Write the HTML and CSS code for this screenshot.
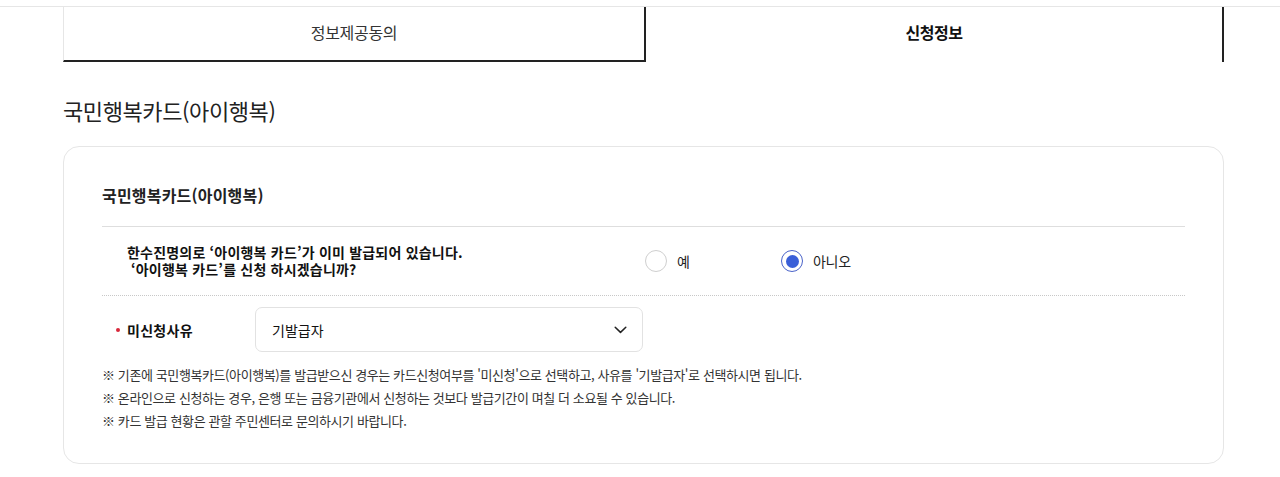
FILE: index.html
```html
<!DOCTYPE html>
<html lang="ko">
<head>
<meta charset="utf-8">
<title>신청정보</title>
<link rel="stylesheet" href="styles.css">
</head>
<body>
<div class="topbar"></div>
<div class="wrap">
  <div class="tabs">
    <div class="tab tab-off">정보제공동의</div>
    <div class="tab tab-on">신청정보</div>
  </div>
  <h2 class="page-title">국민행복카드(아이행복)</h2>
  <div class="card">
    <h3 class="card-title">국민행복카드(아이행복)</h3>
    <div class="q-row">
      <div class="q-text">
        <p class="q-line">한수진명의로 ‘아이행복 카드’가 이미 발급되어 있습니다.</p>
        <p class="q-line q-line2">‘아이행복 카드’를 신청 하시겠습니까?</p>
      </div>
      <label class="radio"><span class="circle"></span><span class="r-label">예</span></label>
      <label class="radio"><span class="circle checked"></span><span class="r-label">아니오</span></label>
    </div>
    <div class="s-row">
      <div class="s-label"><span class="req"></span>미신청사유</div>
      <div class="select">
        <span>기발급자</span>
        <svg class="chev" width="13" height="8" viewBox="0 0 13 8"><path d="M1.2 1.2 L6.5 6.4 L11.8 1.2" fill="none" stroke="#222" stroke-width="1.5" stroke-linecap="round" stroke-linejoin="round"/></svg>
      </div>
    </div>
    <ul class="notes">
      <li>※ 기존에 국민행복카드(아이행복)를 발급받으신 경우는 카드신청여부를 '미신청'으로 선택하고, 사유를 '기발급자'로 선택하시면 됩니다.</li>
      <li>※ 온라인으로 신청하는 경우, 은행 또는 금융기관에서 신청하는 것보다 발급기간이 며칠 더 소요될 수 있습니다.</li>
      <li>※ 카드 발급 현황은 관할 주민센터로 문의하시기 바랍니다.</li>
    </ul>
  </div>
</div>
</body>
</html>
```

FILE: styles.css
```css
html, body {
  margin: 0;
  padding: 0;
  background: #fff;
}
body {
  font-family: "Noto Sans CJK KR", "Noto Sans", sans-serif;
  color: #222;
}
.topbar {
  height: 6px;
  border-bottom: 1px solid #e6e6e6;
}
.wrap {
  width: 1161px;
  margin-left: 63px;
}
.tabs {
  display: flex;
  height: 55px;
}
.tab {
  box-sizing: border-box;
  display: flex;
  align-items: center;
  justify-content: center;
  font-size: 16px;
}
.tab-off {
  width: 581px;
  border-left: 1px solid #e6e6e6;
  border-bottom: 2px solid #222;
  color: #333;
  padding-bottom: 3px;
  letter-spacing: -0.3px;
}
.tab-on {
  width: 580px;
  border-left: 2px solid #222;
  border-right: 2px solid #222;
  font-weight: 700;
  color: #111;
  padding-bottom: 6px;
  letter-spacing: -0.5px;
}
.page-title {
  margin: 33px 0 21px;
  font-size: 22px;
  line-height: 30px;
  font-weight: 400;
  letter-spacing: -0.4px;
  color: #222;
}
.card {
  border: 1px solid #e6e6e6;
  border-radius: 16px;
  padding: 36px 38px 31px 38px;
}
.card-title {
  margin: 0;
  font-size: 16px;
  line-height: 24px;
  font-weight: 700;
  letter-spacing: 0.2px;
  padding-bottom: 19px;
  border-bottom: 1px solid #dedede;
}
.q-row {
  display: flex;
  align-items: center;
  height: 68px;
  border-bottom: 1px dotted #c8c8c8;
}
.q-text {
  box-sizing: border-box;
  width: 543px;
  padding-left: 25px;
  font-size: 14px;
  font-weight: 700;
  letter-spacing: 0.2px;
  color: #111;
}
.q-line {
  margin: 0;
  line-height: 17px;
  white-space: nowrap;
}
.q-line2 {
  padding-left: 4px;
}
.radio {
  display: flex;
  align-items: center;
  gap: 10px;
  width: 136px;
  font-size: 14px;
  letter-spacing: -0.3px;
  color: #222;
}
.circle {
  box-sizing: border-box;
  width: 22px;
  height: 22px;
  border-radius: 50%;
  border: 1px solid #cfcfcf;
  display: flex;
  align-items: center;
  justify-content: center;
}
.circle.checked {
  border: 1.5px solid #4a63c9;
}
.circle.checked::after {
  content: "";
  width: 13px;
  height: 13px;
  border-radius: 50%;
  background: #3a5fd8;
}
.s-row {
  display: flex;
  align-items: center;
  padding-top: 11px;
}
.s-label {
  box-sizing: border-box;
  width: 153px;
  padding-left: 14px;
  display: flex;
  align-items: center;
  font-size: 14px;
  font-weight: 700;
  letter-spacing: 0.3px;
  color: #111;
}
.req {
  width: 4px;
  height: 4px;
  border-radius: 50%;
  background: #d8283a;
  margin-right: 7px;
}
.select {
  box-sizing: border-box;
  width: 388px;
  height: 45px;
  border: 1px solid #e2e2e2;
  border-radius: 7px;
  display: flex;
  align-items: center;
  justify-content: space-between;
  padding: 0 15px 0 16px;
  font-size: 14px;
  letter-spacing: 0;
  color: #111;
}
.chev {
  display: block;
}
.notes {
  list-style: none;
  margin: 11px 0 0;
  padding: 0;
  font-size: 13px;
  line-height: 23px;
  letter-spacing: -0.4px;
  color: #333;
}
```
